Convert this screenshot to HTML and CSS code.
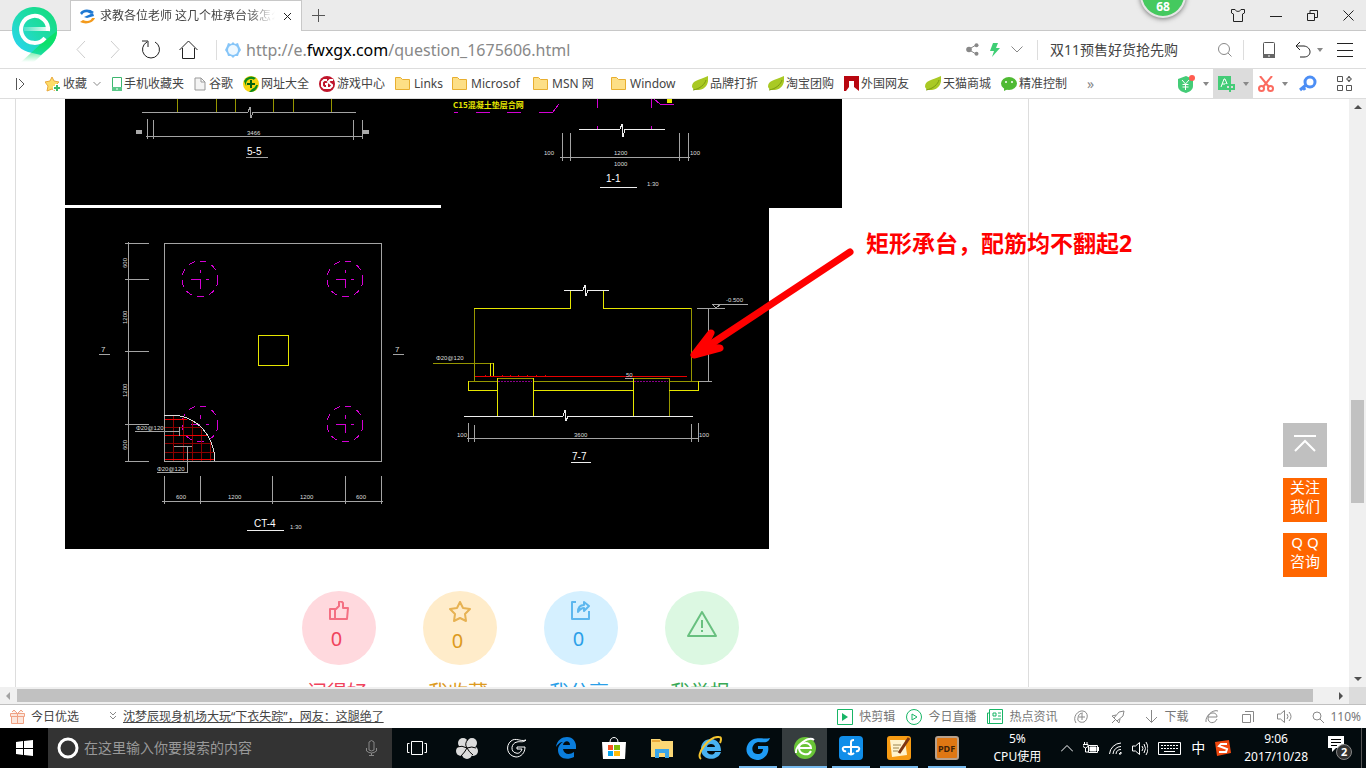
FILE: index.html
```html
<!DOCTYPE html>
<html lang="zh-CN">
<head>
  <meta charset="UTF-8">
  <meta name="viewport" content="width=device-width, initial-scale=1.0">
  <title>求教各位老师 这几个桩承台该怎么配筋</title>
  <link rel="stylesheet" href="styles.css">
</head>
<body>
  <header class="browser">
    <svg class="logo" width="46" height="56" viewBox="0 0 46 56">
      <defs>
        <linearGradient id="lg" x1="0" y1="1" x2="1" y2="0"><stop offset="0" stop-color="#2bd3ff"/><stop offset=".5" stop-color="#1fdcae"/><stop offset="1" stop-color="#12dc74"/></linearGradient>
        <linearGradient id="lt" x1="0" y1="0" x2="0" y2="1"><stop offset="0" stop-color="#0be06a"/><stop offset=".4" stop-color="#0be06a"/><stop offset="1" stop-color="#0be06a" stop-opacity="0"/></linearGradient>
        <linearGradient id="le"><stop offset="0" stop-color="#fff" stop-opacity=".2"/><stop offset="1" stop-color="#fff"/></linearGradient>
      </defs>
      <path d="M23 0a22 22 0 0 1 22 23c0 8-3 13-8 18l-8 7-13-3C6 42 0 33 0 23A22 22 0 0 1 23 0z" fill="url(#lg)"/>
      <path d="M45 24c0 7-4 13-8 17L22 55H9l22-20z" fill="url(#lt)"/>
      <path d="M36 24A13.500 13.500 0 1 0 33 31" fill="none" stroke="#fff" stroke-width="4"/>
      <path d="M12 20h26v4H12z" fill="url(#le)"/>
    </svg>
    <div class="tabbar">
      <div class="tab">
        <svg width="17" height="15" viewBox="0 0 17 15"><path d="M1 4C3 0 10-1 15 3L12 5C8 2 4 3 3 6z" fill="#1e78d2"/><path d="M16 9c-2 5-9 7-15 4l3-2c4 2 8 1 9-2z" fill="#f39a1c"/><path d="M5 8l9-4 1 3-7 2z" fill="#1e78d2"/></svg>
        <span class="tab-title">求教各位老师 这几个桩承台该怎么</span>
        <button class="icon-btn" aria-label="关闭标签"><svg width="9" height="9" viewBox="0 0 9 9" class="ln dark"><path d="M1 1l7 7M8 1L1 8"/></svg></button>
      </div>
      <button class="icon-btn new-tab" aria-label="新标签"><svg width="13" height="13" viewBox="0 0 13 13" class="ln"><path d="M6.500 0v13M0 6.500h13"/></svg></button>
      <div class="win-btns">
        <button class="icon-btn" aria-label="皮肤"><svg width="14" height="13" viewBox="0 0 14 13" class="ln dark"><path d="M4 .5C5 3 9 3 10 .5h3.500V4l-2 1v7.500h-9V5l-2-1V.5z"/></svg></button>
        <button class="icon-btn" aria-label="最小化"><svg width="12" height="13" viewBox="0 0 12 13" class="ln dark"><path d="M0 7.500h12"/></svg></button>
        <button class="icon-btn" aria-label="还原"><svg width="11" height="11" viewBox="0 0 11 11" class="ln dark"><path d="M.5 3.500h7v7h-7zM3 3V.5h7.500v7H8"/></svg></button>
        <button class="icon-btn" aria-label="关闭"><svg width="11" height="11" viewBox="0 0 11 11" class="ln dark"><path d="M.5.5l10 10M10.500.5l-10 10"/></svg></button>
      </div>
      <div class="speed-ball">68</div>
    </div>

    <div class="addressbar">
      <div class="nav-btns">
        <button class="icon-btn" aria-label="后退"><svg width="10" height="17" viewBox="0 0 10 17" class="ln pale"><path d="M9 0L1 8.500 9 17"/></svg></button>
        <button class="icon-btn" aria-label="前进"><svg width="10" height="17" viewBox="0 0 10 17" class="ln pale"><path d="M1 0l8 8.500L1 17"/></svg></button>
        <button class="icon-btn" aria-label="刷新"><svg width="20" height="19" viewBox="0 0 20 19" class="ln dark"><path d="M1 1h6v6M6 2a8.500 8.500 0 1 0 8 0"/></svg></button>
        <button class="icon-btn" aria-label="主页"><svg width="19" height="19" viewBox="0 0 19 19" class="ln dark"><path d="M.5 10L9.500 1l9 9M3.500 8v10.500h12V8"/></svg></button>
      </div>
      <svg class="site" width="16" height="16" viewBox="0 0 16 16"><path d="M8 0l2 2 3-1 1 3 2 4-2 3-1 3-3 0-2 2-2-2-3 0-1-3-2-3 2-4 1-3 3 1z" fill="#86c5f8"/><circle cx="8" cy="8" r="5" fill="#eef8ff"/></svg>
      <div class="url" role="textbox" contenteditable="true" aria-label="地址">http://e.<span class="host">fwxgx.com</span>/question_1675606.html</div>
      <div class="addr-btns">
        <svg width="13" height="13" viewBox="0 0 13 13"><path d="M2.500 6.500L10 2M2.500 6.500L10 11" stroke="#888"/><g fill="#888"><circle cx="3" cy="6.500" r="2.800"/><circle cx="10.500" cy="2.200" r="2"/><circle cx="10.500" cy="10.800" r="2"/></g></svg>
        <svg width="10" height="14" viewBox="0 0 10 14"><path d="M3 0h5L6 5h4L2 14l2-6H0z" fill="#3fce74"/></svg>
        <svg width="12" height="7" viewBox="0 0 12 7" class="ln grey"><path d="M.5.5L6 6 11.500.5"/></svg>
      </div>
      <label class="search">
        <input type="text" value="双11预售好货抢先购" aria-label="搜索">
        <svg width="14" height="14" viewBox="0 0 14 14" class="ln grey"><circle cx="6" cy="6" r="5.500"/><path d="M10 10l3.500 3.500"/></svg>
      </label>
      <div class="menu-btns">
        <button class="icon-btn phone" aria-label="手机"><svg width="12" height="16" viewBox="0 0 12 16"><rect x=".5" y=".5" width="11" height="15" rx="1" fill="none" stroke="#555"/><path d="M0 12h12v4H0z" fill="#666"/><path d="M5 14h2" stroke="#fff"/></svg></button>
        <button class="icon-btn undo" aria-label="撤销"><svg width="16" height="16" viewBox="0 0 16 16" class="ln dark"><path d="M5 0L1 4l4 4M1 4h8c8 1 8 11 0 11H5"/></svg><i class="caret"></i></button>
        <button class="icon-btn" aria-label="菜单"><svg width="16" height="14" viewBox="0 0 16 14" class="ln dark"><path d="M0 .5h16M0 7.500h16M0 13.500h16"/></svg></button>
      </div>
    </div>

    <nav class="bookmarks">
      <svg width="9" height="12" viewBox="0 0 9 12" class="ln toggle"><path d="M.5 0v12M3 1l5 5-5 5"/></svg>
      <a href="#" class="bm bm-fav"><svg width="16" height="16" viewBox="0 0 16 16"><path d="M7 1l2 4 5 1-4 4 1 5-4-2-5 2 1-5-3-4 5-1z" fill="#fddc68" stroke="#e9a93b"/><path d="M12 8v8M8 12h8" stroke="#fff" stroke-width="4"/><path d="M12 9v6M9 12h6" stroke="#3cb868" stroke-width="2"/></svg>收藏<svg width="8" height="6" viewBox="0 0 8 6" class="ln grey drop"><path d="M.5 1L4 4.500 7.500 1"/></svg></a>
      <a href="#" class="bm bm-phone"><svg width="10" height="14" viewBox="0 0 10 14"><path d="M.5.5h9v13h-9z" fill="#fff" stroke="#3db66f"/><path d="M0 10h10v4H0z" fill="#5cc98a"/><path d="M4 12h2" stroke="#fff"/></svg>手机收藏夹</a>
      <a href="#" class="bm bm-doc"><svg width="12" height="14" viewBox="0 0 12 14"><path d="M1 1h6l4 4v8H1zM7 1v4h4" fill="#f4f4f4" stroke="#999"/></svg>谷歌</a>
      <a href="#" class="bm"><svg width="16" height="16" viewBox="0 0 16 16"><circle cx="8" cy="8" r="8" fill="#f7d612"/><path d="M1 5a8 8 0 0 1 12-3L3 10zM15 9a8 8 0 0 1-9 7l7-7z" fill="#0b8c1b"/><circle cx="8" cy="8" r="5" fill="#f7d612"/><path d="M8 4v8M4 8h8" stroke="#056111" stroke-width="2"/></svg>网址大全</a>
      <a href="#" class="bm"><svg width="16" height="16" viewBox="0 0 16 16"><circle cx="8" cy="8" r="8" fill="#c0162c"/><path d="M8 4H5L3 6v4l2 2h3V8H6M14 4h-3L9 6l4 3v1l-2 2H9" fill="none" stroke="#fff" stroke-width="2"/></svg>游戏中心</a>
      <a href="#" class="bm bm-links"><svg width="15" height="13" viewBox="0 0 15 13" class="folder"><path d="M.5.5h5l2 2h7v10H.5z"/></svg>Links</a>
      <a href="#" class="bm bm-wide"><svg width="15" height="13" viewBox="0 0 15 13" class="folder"><path d="M.5.5h5l2 2h7v10H.5z"/></svg>Microsof</a>
      <a href="#" class="bm bm-mid"><svg width="15" height="13" viewBox="0 0 15 13" class="folder"><path d="M.5.5h5l2 2h7v10H.5z"/></svg>MSN 网</a>
      <a href="#" class="bm bm-wide"><svg width="15" height="13" viewBox="0 0 15 13" class="folder"><path d="M.5.5h5l2 2h7v10H.5z"/></svg>Window</a>
      <a href="#" class="bm"><svg width="16" height="15" viewBox="0 0 16 15" class="leaf"><path d="M0 11C0 4 6 5 16 0c1 8-2 15-14 14z"/><path d="M1 14C8 13 13 8 14 4" class="vein"/></svg>品牌打折</a>
      <a href="#" class="bm"><svg width="16" height="15" viewBox="0 0 16 15" class="leaf"><path d="M0 11C0 4 6 5 16 0c1 8-2 15-14 14z"/><path d="M1 14C8 13 13 8 14 4" class="vein"/></svg>淘宝团购</a>
      <a href="#" class="bm bm-wide"><svg width="15" height="15" viewBox="0 0 15 15"><path d="M0 0h15v15l-5-4V5H5v6l-3 4H0z" fill="#b8060f"/></svg>外国网友</a>
      <a href="#" class="bm"><svg width="16" height="15" viewBox="0 0 16 15" class="leaf"><path d="M0 11C0 4 6 5 16 0c1 8-2 15-14 14z"/><path d="M1 14C8 13 13 8 14 4" class="vein"/></svg>天猫商城</a>
      <a href="#" class="bm"><svg width="16" height="14" viewBox="0 0 16 14"><ellipse cx="8" cy="6.500" rx="8" ry="6.500" fill="#4fba33"/><path d="M3 11v3l4-2z" fill="#4fba33"/><circle cx="5" cy="5" r="1" fill="#fff"/><circle cx="11" cy="5" r="1" fill="#fff"/></svg>精准控制</a>
      <a href="#" class="more">»</a>
      <div class="tools">
        <button class="tool" aria-label="购物"><svg width="18" height="18" viewBox="0 0 18 18"><path d="M1 4l8-3 7 3v7c0 4-4 6-7 7-4-1-8-3-8-7z" fill="#44cc77"/><path d="M5 5l3.500 4L12 5M8.500 9v6M5.500 9.500h6M5.500 12h6" class="ln white"/><circle cx="15" cy="3" r="3" fill="#ff5c50"/></svg><i class="caret"></i></button>
        <button class="tool on" aria-label="翻译"><svg width="18" height="18" viewBox="0 0 18 18"><path d="M1 1h13v9h-4v5H1z" fill="#44cc77"/><path d="M4 12L7 4h1l3 7M5 9h5" class="ln white"/><path d="M9 10h8v4H9zM13 8v9" fill="none" stroke="#44cc77" stroke-width="2"/></svg><i class="caret"></i></button>
        <button class="tool" aria-label="截图"><svg width="16" height="16" viewBox="0 0 16 16" fill="none" stroke="#fb6b60" stroke-width="2"><path d="M2 0l9 11M14 0L5 11"/><circle cx="3.500" cy="12.500" r="2.500"/><circle cx="12.500" cy="12.500" r="2.500"/></svg><i class="caret"></i></button>
        <button class="tool key" aria-label="密码"><svg width="18" height="17" viewBox="0 0 18 17" fill="none" stroke="#4c8ef5" stroke-width="3"><circle cx="11" cy="7" r="5"/><path d="M7 10l-6 5M4 12l2 3"/></svg></button>
        <button class="tool" aria-label="扩展"><svg width="15" height="15" viewBox="0 0 15 15" class="ln"><path d="M.5.500h5v5h-5zM.5 9.500h5v5h-5zM9.500 9.500h5v5h-5zM10 2h1.500V.5h1V2H14v2h-1.500v1.500h-1V4H10z"/></svg></button>
      </div>
    </nav>
  </header>

  <main class="viewport">
    <div class="page">
      <article class="post">
        <svg class="cad cad-top" width="777" height="109" viewBox="0 0 777 109">
          <rect width="777" height="109"/>
          <path class="paper" d="M0 106h376v3H0z"/>
          <path class="y dim" d="M112 0v13M151 0v13M170 0v13M208 0v13M228 0v13M266 0v13"/>
          <path class="w" d="M77 13h106l2-5 1 11 2-6h103M82 20v20M88 21v19M288 21v20M297 21v19M81 37h217M181 58h22"/>
          <path class="blob" d="M71 31h6v4h-6zM298 31h6v4h-6z"/>
          <text x="182" y="36" class="s">3466</text>
          <text x="182" y="56" class="l">5-5</text>
          <text x="388" y="9" class="note">C15混凝土垫层合网</text>
          <path class="m" d="M389 13h4M411 13h14M442 13h14M474 13h14l6-8M532 0v9M586 0v9M589 0l6 5h14M532 27v3M586 27v3"/>
          <path class="note-mark" d="M602 0h5v4h-5z"/>
          <path class="w lit" d="M514 30h41l2-5 1 13 2-8h40M535 88h37"/>
          <path class="w" d="M497 34v28M505 34v28M614 34v28M623 34v28M495 58h130"/>
          <text x="479" y="56" class="s">100</text><text x="549" y="56" class="s">1200</text><text x="549" y="67" class="s">1000</text><text x="625" y="56" class="s">100</text>
          <text x="541" y="83" class="l">1-1</text><text x="582" y="87" class="s">1:30</text>
        </svg>
        <figure class="shot">
          <svg class="cad" width="704" height="341" viewBox="0 0 704 341">
            <rect width="704" height="341"/>
            <!-- plan -->
            <path class="w" d="M99 35h217v218H99zM63 34v220M60 35h24M60 71h24M60 143h24M60 216h24M60 253h24M34 146h11M328 146h11"/>
            <path class="y" d="M193 127h30v30h-30z"/>
            <g class="m round">
              <circle cx="135" cy="71" r="18"/><circle cx="280" cy="71" r="18"/><circle cx="135" cy="216" r="18"/><circle cx="280" cy="216" r="18"/>
            </g>
            <path class="m" d="M126 71h9v10M135 62v3M141 71h3M271 71h9v9M280 62v3M286 71h3M126 216h9M135 207v4M141 216h3M271 216h9v9M280 207v4M286 216h3"/>
            <path class="r dim" d="M108 208v45M118 209v44M127 213v40M136 221v32M145 233v20M100 219h36M100 235h46M100 244h49"/>
            <path class="r" d="M100 211h22M100 227h42M100 251h50"/>
            <path class="w arc" d="M99 207h12c20 3 38 18 39 46"/>
            <path class="w" d="M70 223h45M114 219v9M109 238h18M122 238v26H92M99 268v28M135 268v28M207 268v28M280 268v28M316 268v28M97 293h221"/>
            <path class="w lit" d="M182 322h37"/>
            <text x="71" y="222" class="s">Φ20@120</text><text x="92" y="263" class="s">Φ20@120</text>
            <text x="36" y="144" class="s lit">7</text><text x="330" y="144" class="s lit">7</text>
            <text x="111" y="291" class="s">600</text><text x="163" y="291" class="s">1200</text><text x="235" y="291" class="s">1200</text><text x="291" y="291" class="s">600</text>
            <text transform="translate(62 60) rotate(-90)" class="s">600</text><text transform="translate(62 116) rotate(-90)" class="s">1200</text><text transform="translate(62 189) rotate(-90)" class="s">1200</text><text transform="translate(62 242) rotate(-90)" class="s">600</text>
            <text x="189" y="319" class="l">CT-4</text><text x="225" y="321" class="s">1:30</text>
            <!-- section 7-7 -->
            <path class="y dim" d="M409 100v73M626 100v73M432 170h36M568 170h36M604 170v38M368 155h60M403 173h29M468 173h100M604 173h29"/>
            <path class="y" d="M409 100h96V83M538 83v17h88M432 170v38M468 170v38M568 170v38M403 173v9h29M468 182h100M604 182h29v-9M425 155v13M428 155v13"/>
            <path class="r" d="M410 168h212M420 167h1M437 167h1M445 167h1M453 167h1M462 167h1M471 167h1M480 167h1"/>
            <path class="m dots" d="M433 173h34M569 173h34"/>
            <path class="w lit" d="M499 82h19l2-5 1 11 2-6h21M399 208h99l2-6 1 11 2-5h125M506 254h20"/>
            <path class="w" d="M403 215v19M409 217v17M626 216v18M633 215v19M402 230h232M632 100h28M643 100v73M634 173h13M647 96h36M647 96l4 4 5-4M560 170h8"/>
            <text x="371" y="152" class="s">Φ20@120</text><text x="392" y="229" class="s">100</text><text x="509" y="229" class="s">3600</text><text x="634" y="229" class="s">100</text><text x="661" y="94" class="s">-0.500</text><text x="561" y="169" class="s">50</text>
            <text x="507" y="252" class="l">7-7</text>
            <path class="arrow" d="M785 44L631 146"/>
            <path class="arrow head" d="M646 125l-17 22 26-7-16-1z"/>
          </svg>
          <figcaption>矩形承台，配筋均不翻起2</figcaption>
        </figure>
        <div class="votes">
          <a href="#" class="vote good"><span class="disc"><svg width="20" height="20" viewBox="0 0 20 20"><path d="M6 8h1l3-3V1l2-1 2 2v5h5l-1 11H6zM1 8h5v10H1z"/></svg><b>0</b></span><span class="name">问得好</span></a>
          <a href="#" class="vote fav"><span class="disc"><svg width="22" height="22" viewBox="0 0 22 22"><path d="M11 1l3 6 7 1-5 5 1 7-6-3-6 3 1-7-5-5 7-1z"/></svg><b>0</b></span><span class="name">我收藏</span></a>
          <a href="#" class="vote share"><span class="disc"><svg width="20" height="20" viewBox="0 0 20 20"><path d="M5 1H1v17h17v-8M7 11c0-5 2-7 6-7V1l5 4-5 5V7c-3 0-4 1-6 4z"/></svg><b>0</b></span><span class="name">我分享</span></a>
          <a href="#" class="vote report"><span class="disc"><svg width="30" height="26" viewBox="0 0 30 26"><path d="M15 1l14 24H1zM15 9v8M15 19v2"/></svg></span><span class="name">我举报</span></a>
        </div>
      </article>
      <aside class="side-btns">
        <button class="top" aria-label="返回顶部"><svg width="22" height="18" viewBox="0 0 22 18"><path d="M0 2h22M1 17L11 7l10 10"/></svg></button>
        <button>关注<br>我们</button>
        <button>Q Q<br>咨询</button>
      </aside>
    </div>
    <div class="vscroll"><i class="arr up"></i><div class="thumb"></div><i class="arr down"></i></div>
    <div class="hscroll"><i class="arr left"></i><div class="thumb"></div><i class="arr right"></i></div>
    <div class="corner"></div>
  </main>

  <footer class="statusbar">
    <a href="#" class="st gift"><svg width="15" height="14" viewBox="0 0 15 14" fill="#fbe6dc" stroke="#f0a183"><path d="M.5 3.500h14v3H.5zM1.500 6.500h12v7h-12zM7.500 3v11M7 3L4 0 2 2M8 3l3-3 2 2"/></svg>今日优选</a>
    <a href="#" class="st news"><svg width="8" height="9" viewBox="0 0 8 9" class="ln grey"><path d="M1 0l3 3 3-3M1 4l3 3 3-3"/></svg><u>沈梦辰现身机场大玩“下衣失踪”，网友：这腿绝了</u></a>
    <div class="st-right">
      <a href="#" class="st"><svg width="16" height="16" viewBox="0 0 16 16"><path d="M.5.5h15v15H.5z" class="ln green"/><path d="M5 4l6 4-6 4z" fill="#18b566"/></svg>快剪辑</a>
      <a href="#" class="st"><svg width="16" height="16" viewBox="0 0 16 16" class="ln green"><circle cx="8" cy="8" r="7.500"/><path d="M6 5l5 3-5 3z"/></svg>今日直播</a>
      <a href="#" class="st"><svg width="16" height="15" viewBox="0 0 16 15" class="ln green"><path d="M2.500.5h13v14H.5V4h2zM2.500 4v10M6 4h3v3H6zM11 4h3M11 7h3M6 10h8"/></svg>热点资讯</a>
    </div>
    <div class="st-icons">
      <button class="icon-btn" aria-label="加速"><svg width="14" height="14" viewBox="0 0 14 14" class="ln grey"><path d="M2 13C-2 7 4 0 9 1c6 1 5 9 1 11-4 1-7-1-6-4 0-3 2-5 5-5M5 7h6M8 4v6"/></svg></button>
      <button class="icon-btn" aria-label="清理"><svg width="14" height="14" viewBox="0 0 14 14" class="ln grey"><path d="M13 1L8 2 3 8l3 3 6-5zM5 5L1 6l2 2M9 9l-1 4-2-2M1 13l3-3"/></svg></button>
      <button class="icon-btn dl"><svg width="13" height="14" viewBox="0 0 13 14" class="ln grey"><path d="M6.500 0v12M1 7l5.500 5.500L12 7"/></svg>下载</button>
      <button class="icon-btn" aria-label="内核"><svg width="14" height="14" viewBox="0 0 14 14" class="ln grey"><path d="M12 9c-2 5-9 5-9-1s9-7 9-1H3M13 1C8-1 0 6 1 12"/></svg></button>
      <button class="icon-btn" aria-label="窗口"><svg width="12" height="12" viewBox="0 0 12 12" class="ln grey"><path d="M.5 3.500h8v8h-8zM3 .5h8.500V11"/></svg></button>
      <button class="icon-btn" aria-label="声音"><svg width="15" height="13" viewBox="0 0 15 13" class="ln grey"><path d="M.5 4h3l4-3.500v12L3.500 9h-3zM10 4q2 2.500 0 5M12 2q4 4.500 0 9"/></svg></button>
      <button class="icon-btn zoom"><svg width="12" height="12" viewBox="0 0 12 12" class="ln grey"><circle cx="5" cy="5" r="4"/><path d="M8 8l4 4"/></svg>110%</button>
    </div>
  </footer>

  <footer class="taskbar">
    <button class="start" aria-label="开始"><svg width="17" height="16" viewBox="0 0 17 16" fill="#fff"><path d="M0 2l7-1v7H0zM8 1l9-1v8H8zM0 9h7v6l-7-1zM8 9h9v7l-9-1z"/></svg></button>
    <label class="cortana">
      <svg width="22" height="22" viewBox="0 0 22 22"><circle cx="11" cy="11" r="9" fill="none" stroke="#fff" stroke-width="3"/></svg>
      <input type="text" placeholder="在这里输入你要搜索的内容" aria-label="搜索">
      <svg width="11" height="16" viewBox="0 0 11 16" class="ln grey"><path d="M3 2q2.500-3 5 0v8q-2.500 2-5 0zM.5 8v3q5 4 10 0V8M5.500 13v3M3 15.500h5"/></svg>
    </label>
    <div class="apps first">
      <button aria-label="任务视图"><svg width="20" height="14" viewBox="0 0 20 14" class="ln white"><path d="M4.500.5h11v13h-11zM2.500 2.500h-2v9h2M17.500 2.500h2v9h-2"/></svg></button>
      <button aria-label="应用"><svg width="22" height="22" viewBox="0 0 22 22"><g fill="#dcdcdc"><circle cx="7" cy="6" r="5"/><circle cx="16" cy="6" r="5"/><circle cx="5" cy="14" r="5"/><circle cx="17" cy="14" r="5"/><circle cx="11" cy="17" r="5"/><circle cx="11" cy="11" r="4"/></g><path d="M11 11Q8 7 12 2M11 11q5-2 9 0M11 11q2 4 6 7M11 11q-2 4-6 8M11 11Q6 8 1 10" class="ln black"/></svg></button>
      <button aria-label="应用"><svg width="20" height="20" viewBox="0 0 20 20" class="ln white"><path d="M19 2c-3 3-6 1-9 2-6 1-7 10-1 11 3 1 5-1 6-4h-5v-2h8c0 6-4 10-9 10C0 18-2 8 4 3c5-4 9 1 15-1z"/></svg></button>
    </div>
    <div class="apps">
      <button aria-label="Edge"><svg width="22" height="22" viewBox="0 0 22 22"><path d="M1 10C2 3 7 0 12 0c6 0 9 5 9 9v3H8c1 6 7 6 11 3v5c-8 4-16 1-16-7 0-4 3-7 5-8C5 5 3 7 1 10zm7-2h7c0-5-6-5-7 0z" fill="#0a7ddc"/></svg></button>
      <button aria-label="商店"><svg width="24" height="24" viewBox="0 0 24 24"><path d="M0 6h24l-1 17H1z" fill="#fff"/><path d="M8 6c0-6 8-6 8 0" class="ln white"/><path d="M6 9h5v5H6z" fill="#f35325"/><path d="M12 9h6v5h-6z" fill="#81bc06"/><path d="M6 15h5v5H6z" fill="#05a6f0"/><path d="M12 15h6v5h-6z" fill="#ffba08"/></svg></button>
      <button aria-label="资源管理器"><svg width="22" height="19" viewBox="0 0 22 19"><path d="M0 0h9l2 2h11v16H0z" fill="#fbd775"/><path d="M1 1h8v2H1z" fill="#e9a83a"/><path d="M4 10h14v9h-4v-5H8v5H4z" fill="#3aa5e8"/></svg></button>
      <button aria-label="IE"><svg width="24" height="24" viewBox="0 0 24 24"><path d="M3 13C3 7 7 3 13 3s10 5 10 12H9c0 4 7 5 8 1h6c-3 10-20 9-20-3zm6-2h8c0-4-8-4-8 0z" fill="#49b3f2"/><path d="M3 23C-3 19 11 0 21 1c3 0 2 4 1 6" fill="none" stroke="#f4c42f" stroke-width="2"/></svg></button>
      <button class="open" aria-label="浏览器"><svg width="24" height="23" viewBox="0 0 24 23"><path d="M24 1c-2 6-8 4-12 4-8 2-7 13 0 12 3 0 5-2 5-5h-5V9h10c2 9-5 14-11 14C2 22-2 14 2 7 8-2 16 3 24 1z" fill="#1e9bf5"/></svg></button>
      <button class="open active" aria-label="360浏览器"><svg width="22" height="22" viewBox="0 0 22 22"><circle cx="11" cy="11" r="11" fill="#69c437"/><path d="M17 14c-3 6-12 3-12-3s12-7 12 0H5M20 3C15-1 1 8 2 16" fill="none" stroke="#fff" stroke-width="2"/></svg></button>
      <button class="open" aria-label="云盘"><svg width="24" height="24" viewBox="0 0 24 24"><rect width="24" height="24" rx="4" fill="#108ee9"/><path d="M12 19V6q0-2 3-2M6 11h12c4 0 2 5-1 4M6 11c-4 0-2 5 1 4M9 17q3 3 6 0" fill="none" stroke="#fff" stroke-width="2"/></svg></button>
      <button class="open" aria-label="笔记"><svg width="24" height="24" viewBox="0 0 24 24"><rect width="24" height="24" rx="3" fill="#f79b13"/><path d="M3 4h15l2 15-15 2z" fill="#fff3cd"/><path d="M6 9h8M6 12h6M6 15h5" stroke="#9a8450"/><path d="M22 2L12 17" stroke="#7c3513" stroke-width="3"/></svg></button>
      <button class="open" aria-label="PDF"><svg width="24" height="24" viewBox="0 0 24 24"><rect x="1" y="1" width="22" height="22" rx="2" fill="#df7713" stroke="#b8a18c" stroke-width="2"/><text x="3" y="16" class="pdf">PDF</text></svg></button>
    </div>
    <div class="tray">
      <div class="cpu">5%<br>CPU使用</div>
      <div class="tray-icons">
        <svg width="12" height="7" viewBox="0 0 12 7" class="ln white"><path d="M0 6.500l6-6 6 6"/></svg>
        <svg width="16" height="12" viewBox="0 0 16 12" class="ln white"><path d="M5.500 3.500h9v7h-9zM15.500 5v4M0 2.500h5v2L2.500 6 0 4.500zM1.500 0v2M4 0v2M2.500 6v4H5"/><path d="M7 5h6v4H7z" fill="#fff"/></svg>
        <svg width="13" height="13" viewBox="0 0 13 13" class="ln white"><path d="M.5 12A12 12 0 0 1 12 1M4 12a8 8 0 0 1 8-7.500M7 12a5 5 0 0 1 5-4.500M10 12l2-2v2z"/></svg>
        <svg width="16" height="13" viewBox="0 0 16 13" class="ln white"><path d="M.5 4h3l4-3.500v12L3.500 9h-3zM10 4q2 2.500 0 5M12 2q3 4.500 0 9M14 0q4 6.500 0 13"/></svg>
        <svg width="23" height="13" viewBox="0 0 23 13" class="ln white"><path d="M.5.5h22v12H.5z"/><path d="M3 3.500h18M3 6.500h18" stroke-dasharray="2 1"/><path d="M6 9.500h11"/></svg>
        <span>中</span>
        <svg width="16" height="16" viewBox="0 0 16 16"><path d="M0 2l14-2 2 13-14 3z" fill="#f0480f"/><path d="M12 4H6L4 6l8 3-1 3H4" fill="none" stroke="#fff" stroke-width="2"/></svg>
      </div>
      <div class="clock">9:06<br>2017/10/28</div>
      <button class="notice" aria-label="通知"><svg width="24" height="24" viewBox="0 0 24 24"><path d="M0 0h16v12h-8l-4 4v-4H0z" fill="#fff"/><path d="M3 3.500h10M3 6.500h10M3 9.500h6" stroke="#000"/><circle cx="16" cy="16" r="7.500" fill="#333" stroke="#888"/><text x="13" y="20" class="badge">2</text></svg></button>
    </div>
  </footer>
</body>
</html>
```
FILE: styles.css
```css
* {
  box-sizing: border-box;
}

body {
  margin: 0;
  height: 100vh;
  display: flex;
  flex-direction: column;
  overflow: hidden;
  background: #fff;
  color: #444;
  font-family: "Noto Sans", "Noto Sans CJK SC", sans-serif;
  font-size: 12px;
  line-height: 18px;
}

a {
  color: inherit;
  text-decoration: none;
}

button,
input {
  font: inherit;
  color: inherit;
  padding: 0;
  border: none;
  background: none;
}

svg {
  flex: none;
}

.ln {
  fill: none;
  stroke: #555;
}
.dark { stroke: #222; }
.grey { stroke: #888; }
.pale { stroke: #ccc; }
.white { stroke: #fff; }
.black { stroke: #000; }
.green { stroke: #18b566; }

.icon-btn {
  display: flex;
  align-items: center;
}

.caret {
  border: 3px solid transparent;
  border-top: 4px solid #888;
  border-bottom: 0;
}

/* browser header */
.browser {
  position: relative;
  flex: none;
}

.logo {
  position: absolute;
  left: 12px;
  top: 7px;
}

.tabbar {
  display: flex;
  height: 31px;
  padding-left: 70px;
  background: #ebebeb;
  border-bottom: 1px solid #c8c8c8;
}

.tab {
  display: flex;
  align-items: center;
  width: 232px;
  height: 31px;
  padding: 0 9px 0 8px;
  background: #fff;
  border: 1px solid #c8c8c8;
  border-bottom: none;
}

.tab-title {
  flex: 1;
  margin: 0 8px 0 4px;
  overflow: hidden;
  white-space: nowrap;
  mask-image: linear-gradient(to right, #000 84%, transparent);
}

.new-tab {
  margin-left: 10px;
}

.win-btns {
  display: flex;
  align-items: center;
  gap: 25px;
  margin-left: auto;
  padding-right: 12px;
}

.speed-ball {
  position: absolute;
  right: 180px;
  top: -28px;
  width: 46px;
  height: 46px;
  padding-top: 24px;
  border: 2px solid #e6e6e6;
  border-radius: 50%;
  background: #45c95f;
  box-shadow: 0 1px 5px #777;
  color: #fff;
  font-weight: bold;
  text-align: center;
}

.addressbar {
  display: flex;
  align-items: center;
  height: 38px;
  padding: 0 13px 0 76px;
  border-bottom: 1px solid #ddd;
}

.nav-btns {
  display: flex;
  align-items: center;
  gap: 18px;
  height: 20px;
  padding-right: 18px;
  border-right: 1px solid #ddd;
}

.nav-btns .icon-btn:first-child {
  margin-right: 6px;
}

.nav-btns .icon-btn:nth-child(2) {
  margin-right: 3px;
}

.site {
  margin: 0 5px 0 8px;
}

.url {
  flex: 1;
  font-size: 16px;
  line-height: 24px;
  color: #888;
  white-space: nowrap;
}

.host {
  color: #000;
}

.addr-btns {
  display: flex;
  align-items: center;
  gap: 11px;
  height: 20px;
  padding-right: 14px;
  border-right: 1px solid #ddd;
}

.search {
  display: flex;
  align-items: center;
  height: 20px;
  padding: 0 11px 0 12px;
  border-right: 1px solid #ddd;
}

.search input {
  width: 168px;
  font-size: 14px;
}

.menu-btns {
  display: flex;
  align-items: center;
  gap: 18px;
  padding-left: 19px;
}

.phone {
  margin-right: 2px;
}

.menu-btns .undo {
  gap: 6px;
  margin-right: -4px;
}

.bookmarks {
  display: flex;
  align-items: center;
  gap: 10px;
  height: 30px;
  padding: 0 14px 0 16px;
  border-bottom: 1px solid #ddd;
}

.toggle {
  margin-right: 10px;
}

.bm {
  display: flex;
  align-items: center;
  gap: 2px;
  white-space: nowrap;
}

.bm-fav { width: 57px; }
.bm-phone { width: 72px; }
.bm-doc { gap: 3px; }
.bm-links { width: 47px; }
.bm-mid { width: 68px; }
.bm-wide { width: 71px; }

.drop {
  margin-left: 4px;
}

.folder {
  margin-right: 2px;
  fill: #fddf86;
  stroke: #e8ae2f;
}

.leaf {
  fill: #a9c924;
}

.vein {
  fill: none;
  stroke: #7c9c12;
}

.more {
  margin-left: 10px;
  font-size: 14px;
  color: #888;
}

.tools {
  display: flex;
  align-self: stretch;
  margin-left: auto;
}

.tool {
  display: flex;
  align-items: center;
  justify-content: center;
  gap: 8px;
  width: 40px;
}

.tool.on {
  background: #dcdcdc;
}

.tool.key {
  width: 30px;
}

.tool:last-child {
  width: 29px;
  justify-content: flex-end;
}

/* page area with its scrollbars */
.viewport {
  flex: 1;
  min-height: 0;
  display: grid;
  grid-template: minmax(0, 1fr) 17px / minmax(0, 1fr) 17px;
}

.page {
  position: relative;
  overflow: hidden;
  padding-left: 15px;
}

.post {
  width: 1014px;
  padding: 0 49px;
  border: 1px solid #ddd;
  border-width: 0 1px;
}

.cad {
  display: block;
  overflow: visible;
  fill: #000;
  stroke: none;
  shape-rendering: crispEdges;
  font-family: "Liberation Sans", sans-serif;
}

.cad path,
.cad circle {
  fill: none;
}

.cad .paper { fill: #fff; }
.cad .blob { fill: #aaa; }
.cad .w { stroke: #a4a4a4; }
.cad .y { stroke: #e6e600; }
.cad .y.dim { stroke: #969600; }
.cad .m { stroke: #d400d4; }
.cad .r { stroke: #e60000; }
.cad .r.dim { stroke: #8a0000; }
.cad .w.lit { stroke: #eee; }
.cad .w.arc { stroke: #ddd; }
.cad .round { stroke-dasharray: 7 5; }
.cad .dots { stroke: #808; stroke-dasharray: 2 1; }
.cad .note-mark { fill: #e6e600; }

.cad .s {
  fill: #ddd;
  font-size: 6px;
}

.cad .l {
  fill: #fff;
  font-size: 10px;
}

.cad .s.lit {
  font-size: 8px;
}

.cad .note {
  fill: #e6e600;
  font-family: "Noto Sans CJK SC", sans-serif;
  font-size: 8px;
  font-weight: bold;
}

.cad .arrow {
  stroke: #f00;
  stroke-width: 7;
  stroke-linecap: round;
  stroke-linejoin: round;
  shape-rendering: auto;
}

.cad .head {
  fill: #f00;
}

.shot {
  display: flex;
  margin: 0;
}

.shot figcaption {
  margin: 21px 0 0 97px;
  color: #f00;
  font-size: 23px;
  font-weight: bold;
  line-height: 28px;
  white-space: nowrap;
}

.votes {
  display: flex;
  gap: 47px;
  margin: 42px 0 0 237px;
}

.vote {
  display: flex;
  flex-direction: column;
  align-items: center;
  width: 74px;
  font-size: 20px;
  line-height: 28px;
  white-space: nowrap;
}

.name {
  margin-right: 4px;
}

.disc {
  display: flex;
  flex-direction: column;
  align-items: center;
  gap: 4px;
  width: 74px;
  height: 74px;
  margin-bottom: 14px;
  padding-top: 10px;
  border-radius: 50%;
}

.disc svg {
  fill: none;
  stroke: currentColor;
  stroke-width: 2;
  stroke-linejoin: round;
  opacity: 0.7;
}

.disc b {
  margin-right: 5px;
  font-size: 20px;
  font-weight: normal;
}

.good { color: #f0435c; }
.good .disc { background: #ffd9de; }
.fav { color: #dd9a21; }
.fav .disc { background: #ffecca; }
.share { color: #2b9fe8; }
.share .disc { background: #d5f0ff; }
.report { color: #38a956; }
.report .disc { padding-top: 20px; background: #dcf8e2; }

.side-btns {
  position: absolute;
  right: 22px;
  bottom: 110px;
  display: flex;
  flex-direction: column;
  gap: 11px;
}

.side-btns button {
  width: 44px;
  height: 44px;
  padding-bottom: 6px;
  background: #f60;
  color: #fff;
  font-size: 15px;
  line-height: 19px;
}

.side-btns .top {
  padding-bottom: 0;
  background: #c0c0c0;
}

.top path {
  fill: none;
  stroke: #fff;
  stroke-width: 2;
}

.vscroll,
.hscroll {
  display: flex;
  align-items: center;
  background: #f0f0f0;
}

.vscroll {
  flex-direction: column;
  padding: 6px 0;
}

.hscroll {
  padding: 0 6px;
}

.thumb {
  background: #c1c1c1;
}

.vscroll .thumb {
  width: 13px;
  height: 103px;
  margin: 291px 0 auto;
}

.hscroll .thumb {
  flex: 1;
  height: 13px;
  margin: 0 26px 0 7px;
}

.arr {
  border: 4px solid transparent;
}

.up { border-top: 0; border-bottom-color: #505050; }
.down { border-bottom: 0; border-top-color: #505050; }
.left { border-left: 0; border-right-color: #a3a3a3; }
.right { border-right: 0; border-left-color: #505050; }

.corner {
  background: #dcdcdc;
}

/* status bar */
.statusbar {
  flex: none;
  display: flex;
  align-items: center;
  height: 24px;
  padding: 0 5px 0 10px;
  border-top: 1px solid #c0c0c0;
}

.st {
  display: flex;
  align-items: center;
  gap: 6px;
  white-space: nowrap;
}

.news {
  margin-left: 30px;
}

.st-right {
  display: flex;
  gap: 11px;
  margin-left: auto;
  color: #777;
}

.st-icons {
  display: flex;
  align-items: center;
  gap: 23px;
  margin-left: 17px;
  color: #777;
}

.dl,
.zoom {
  gap: 6px;
}

.dl {
  margin: 0 -6px 0 -3px;
}

.zoom {
  margin-left: -3px;
}

/* windows taskbar */
.taskbar {
  flex: none;
  display: flex;
  height: 40px;
  background: #030b0e;
  color: #fff;
}

.start {
  width: 48px;
  padding-top: 4px;
  background: #000;
}

.cortana {
  display: flex;
  align-items: center;
  width: 344px;
  padding: 0 15px 0 9px;
  background: #333;
}

.cortana input {
  flex: 1;
  margin-left: 5px;
  font-size: 14px;
}

.cortana input::placeholder {
  color: #999;
  opacity: 1;
}

.apps {
  display: flex;
}

.apps button {
  display: flex;
  align-items: center;
  justify-content: center;
  width: 48px;
}

.first button {
  width: 50px;
}

.apps .open {
  background: linear-gradient(#76b9ed, #76b9ed) bottom / 38px 2px no-repeat;
}

.apps .active {
  width: 45px;
  padding-top: 2px;
  background: #363d3f;
  border-bottom: 2px solid #76b9ed;
}

.pdf {
  fill: #402208;
  font-size: 9px;
  font-weight: bold;
}

.tray {
  display: flex;
  align-items: center;
  margin-left: auto;
}

.cpu,
.clock {
  text-align: center;
}

.tray-icons {
  display: flex;
  align-items: center;
  gap: 10px;
  margin: 0 13px 0 20px;
}

.tray-icons span {
  font-size: 14px;
}

.notice {
  display: flex;
  align-items: center;
  height: 40px;
  margin: 0 4px 0 20px;
  padding-right: 9px;
  border-right: 1px solid #555;
}

.badge {
  fill: #fff;
  font-size: 11px;
  font-weight: bold;
}
```
